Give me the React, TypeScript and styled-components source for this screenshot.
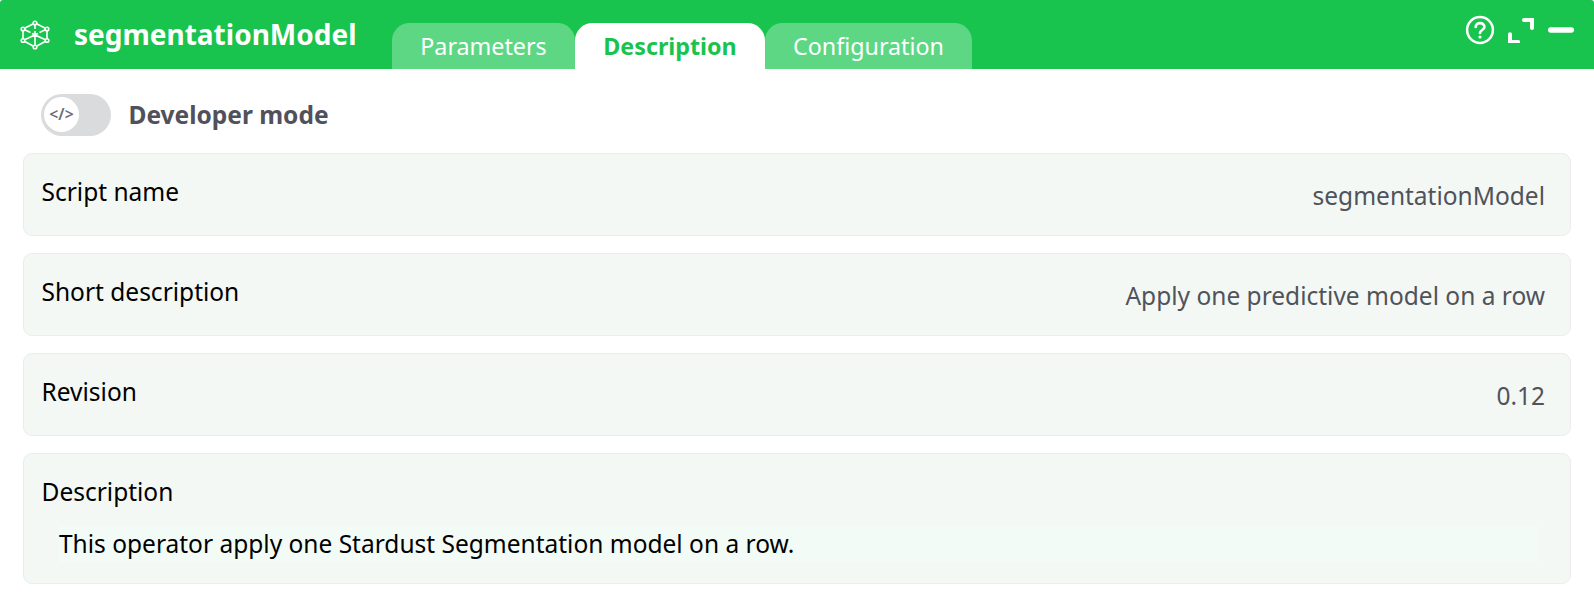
import React from "react";
import styled, { createGlobalStyle } from "styled-components";

const GlobalStyle = createGlobalStyle`
  * { box-sizing: border-box; }
  body {
    margin: 0;
    background: #fff;
    font-family: "Noto Sans", sans-serif;
    font-size: 24.5px;
    color: #000;
  }
`;

const Panel = styled.div`
  height: 608px;
  background: #fff;
`;

const Header = styled.header`
  display: flex;
  height: 69px;
  padding-left: 20px;
  background: #18c44d;
  border-radius: 3px 3px 0 0;
  color: #fff;
`;

const ModelIcon = styled.svg`
  flex: none;
  width: 30px;
  height: 30px;
  margin-top: 20px;
`;

const Title = styled.h1`
  width: 318px;
  margin: 0 0 0 24px;
  font-size: 28px;
  font-weight: 700;
  line-height: 68px;
`;

const Tabs = styled.nav`
  display: flex;
  align-items: flex-end;
`;

const Tab = styled.button<{ $active?: boolean; $width: number }>`
  width: ${(p) => p.$width}px;
  height: 46px;
  padding: 0;
  border: 0;
  border-radius: 17.5px 17.5px 0 0;
  background: ${(p) => (p.$active ? "#fff" : "#5dd783")};
  color: ${(p) => (p.$active ? "#18c44d" : "#fff")};
  font: ${(p) => (p.$active ? 700 : 400)} 23.275px/46px "Noto Sans", sans-serif;
`;

const Actions = styled.div`
  display: flex;
  gap: 12px;
  margin: 16px 19px 0 auto;
`;

const ActionIcon = styled.svg`
  width: 28px;
  height: 28px;
`;

const ModeRow = styled.div`
  display: flex;
  align-items: center;
  gap: 17.5px;
  height: 42px;
  margin: 25px 0 17px 41px;
`;

const Toggle = styled.div`
  width: 70px;
  height: 42px;
  padding: 3px;
  border-radius: 21px;
  background: #dadbdd;
`;

const Knob = styled.div`
  width: 35px;
  height: 35px;
  border-radius: 50%;
  background: #fff;
  color: #6b6c72;
  font-size: 15.75px;
  font-weight: 600;
  line-height: 34px;
  text-align: center;
`;

const ModeLabel = styled.span`
  color: #50515a;
  font-weight: 700;
  line-height: 42px;
`;

const Cards = styled.main`
  display: flex;
  flex-direction: column;
  gap: 17px;
  padding: 0 23px;
`;

const Card = styled.section<{ $height: number }>`
  height: ${(p) => p.$height}px;
  padding: 20px 25px 0 17.5px;
  border: 1px solid #ebeceb;
  border-radius: 9px;
  background: #f3f8f5;
`;

const CardLine = styled.div`
  display: flex;
  justify-content: space-between;
  line-height: 36px;
`;

const Value = styled.span`
  margin-top: 4px;
  color: #50535a;
`;

const LongText = styled.p`
  height: 36px;
  margin: 16px 7px 0 17.5px;
  background: #f2fbf6;
  line-height: 36px;
`;

const fields = [
  { label: "Script name", value: "segmentationModel" },
  { label: "Short description", value: "Apply one predictive model on a row" },
  { label: "Revision", value: "0.12" },
];

const nodes = [
  [15, 3],
  [27, 9],
  [27, 20.5],
  [15, 27],
  [3, 20.5],
  [3, 9],
];

export default function App() {
  return (
    <Panel>
      <GlobalStyle />
      <Header>
        <ModelIcon viewBox="0 0 30 30" fill="none" stroke="#fff" strokeWidth="1.6">
          <path d="M15 3L27 9V20.5L15 27L3 20.5V9ZM15 5V9M15 11V25M3 9L10.5 12.5M12 13.5L27 20.5M27 9L19.5 12.5M18 13.5L3 20.5" />
          {nodes.map(([x, y]) => (
            <circle key={`${x}-${y}`} cx={x} cy={y} r="1.8" fill="#18c44d" />
          ))}
          <circle cx="15" cy="14.9" r="1.2" fill="#fff" />
        </ModelIcon>
        <Title>segmentationModel</Title>
        <Tabs>
          <Tab $width={183}>Parameters</Tab>
          <Tab $width={190} $active>Description</Tab>
          <Tab $width={207}>Configuration</Tab>
        </Tabs>
        <Actions>
          <ActionIcon viewBox="1 0 28 28" fill="none" stroke="#fff" overflow="visible">
            <circle cx="14" cy="14" r="12.9" strokeWidth="2.5" />
            <path d="M9.7 11C9.7 8.6 11.4 7.1 14 7.1C16.6 7.1 18.4 8.7 18.4 11C18.4 14 14 14 14 17" strokeWidth="2.7" strokeLinecap="round" />
            <circle cx="14" cy="21" r="1.6" fill="#fff" stroke="none" />
          </ActionIcon>
          <ActionIcon viewBox="0 0 28 28" fill="#fff">
            <path d="M16.8 2H27V12.2Q27 14 25 14Q23 14 23 12V6H16.8Q15 6 15 4Q15 2 16.8 2ZM1 27V18Q1 16.2 3 16.2Q5 16.2 5 18V24H11.5Q13 24 13 25.5Q13 27 13 27Z" />
          </ActionIcon>
          <ActionIcon viewBox="0 0 28 28" fill="#fff">
            <rect x="1" y="11.2" width="26" height="5.6" rx="2.8" />
          </ActionIcon>
        </Actions>
      </Header>
      <ModeRow>
        <Toggle>
          <Knob>&lt;/&gt;</Knob>
        </Toggle>
        <ModeLabel>Developer mode</ModeLabel>
      </ModeRow>
      <Cards>
        {fields.map((f) => (
          <Card key={f.label} $height={83}>
            <CardLine>
              <span>{f.label}</span>
              <Value>{f.value}</Value>
            </CardLine>
          </Card>
        ))}
        <Card $height={131}>
          <CardLine>Description</CardLine>
          <LongText>This operator apply one Stardust Segmentation model on a row.</LongText>
        </Card>
      </Cards>
    </Panel>
  );
}
